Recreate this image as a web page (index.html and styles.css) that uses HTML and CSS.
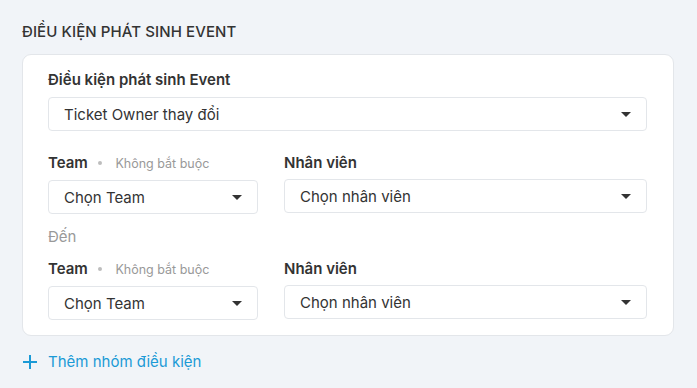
FILE: index.html
```html
<!DOCTYPE html>
<html lang="vi">
<head>
    <meta charset="UTF-8">
    <meta name="viewport" content="width=device-width, initial-scale=1.0">
    <title>Điều kiện phát sinh Event</title>
    <link rel="stylesheet" href="styles.css">
</head>
<body>
    <div class="section">
        <h2 class="section-title">ĐIỀU KIỆN PHÁT SINH EVENT</h2>
        <div class="card">
            <div class="field">
                <label class="label">Điều kiện phát sinh Event</label>
                <div class="select">
                    <span>Ticket Owner thay đổi</span>
                    <span class="caret"></span>
                </div>
            </div>

            <div class="row row-first">
                <div class="field team">
                    <label class="label">Team <span class="dot"></span> <span class="optional">Không bắt buộc</span></label>
                    <div class="select">
                        <span>Chọn Team</span>
                        <span class="caret"></span>
                    </div>
                </div>
                <div class="field staff">
                    <label class="label">Nhân viên</label>
                    <div class="select">
                        <span>Chọn nhân viên</span>
                        <span class="caret"></span>
                    </div>
                </div>
            </div>

            <div class="to">Đến</div>

            <div class="row">
                <div class="field team">
                    <label class="label">Team <span class="dot"></span> <span class="optional">Không bắt buộc</span></label>
                    <div class="select">
                        <span>Chọn Team</span>
                        <span class="caret"></span>
                    </div>
                </div>
                <div class="field staff">
                    <label class="label">Nhân viên</label>
                    <div class="select">
                        <span>Chọn nhân viên</span>
                        <span class="caret"></span>
                    </div>
                </div>
            </div>
        </div>

        <a class="add-group" href="#">
            <svg width="16" height="16" viewBox="0 0 16 16">
                <path d="M8 1v14M1 8h14" stroke="#1b9ad6" stroke-width="2" fill="none"/>
            </svg>
            Thêm nhóm điều kiện
        </a>
    </div>
</body>
</html>
```

FILE: styles.css
```css
body {
    font-family: Inter, "Noto Sans", sans-serif;
    background-color: #f1f4f8;
    color: #333;
    margin: 0;
}

.section {
    padding: 21px 23px 0 22px;
}

.section-title {
    font-size: 15px;
    font-weight: 500;
    line-height: 22px;
    letter-spacing: 0.1px;
    margin: 0 0 11px;
    color: #333;
}

.card {
    background-color: #fff;
    border: 1px solid #e3e6ea;
    border-radius: 9px;
    padding: 15px 26px 15px 25px;
}

.field {
    display: flex;
    flex-direction: column;
}

.label {
    font-size: 15px;
    font-weight: 600;
    line-height: 20px;
    margin-bottom: 7px;
    color: #333;
}

.row .label {
    margin-bottom: 6px;
}

.dot {
    display: inline-block;
    width: 4px;
    height: 4px;
    border-radius: 50%;
    background-color: #bdbdbd;
    vertical-align: middle;
    margin: 0 10px 2px 6px;
}

.optional {
    font-size: 12.5px;
    font-weight: 400;
    color: #999;
}

.select {
    display: flex;
    align-items: center;
    justify-content: space-between;
    height: 34px;
    box-sizing: border-box;
    border: 1px solid #e3e6ea;
    border-radius: 4px;
    padding: 0 15px 0 15px;
    font-size: 15px;
    color: #333;
}

.caret {
    width: 0;
    height: 0;
    border-left: 5px solid transparent;
    border-right: 5px solid transparent;
    border-top: 5px solid #333;
}

.row {
    display: flex;
    gap: 26px;
}

.row-first {
    margin-top: 22px;
}

.team {
    width: 210px;
}

.staff {
    flex: 1;
}

.to {
    font-size: 15px;
    line-height: 20px;
    color: #999;
    margin: 13px 0 12px;
}

.add-group {
    display: flex;
    align-items: center;
    gap: 10px;
    margin-top: 16px;
    font-size: 15px;
    line-height: 20px;
    color: #1b9ad6;
    text-decoration: none;
}
```
